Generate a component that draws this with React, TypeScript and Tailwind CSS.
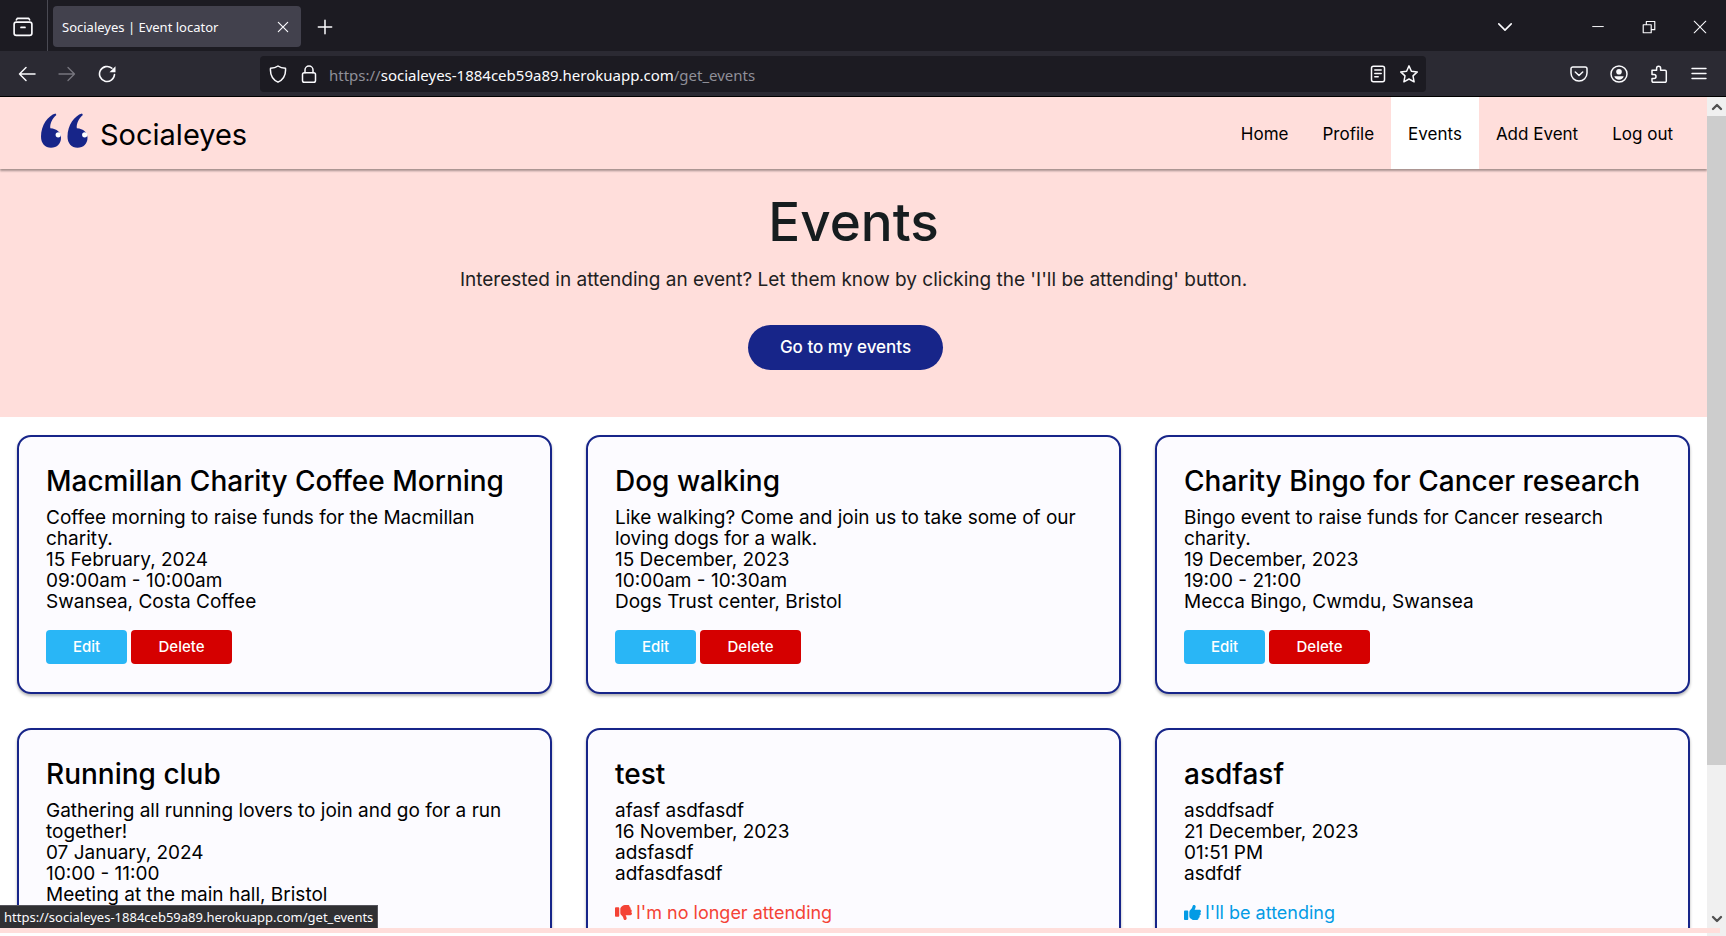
import React from "react";
import { FaThumbsDown, FaThumbsUp } from "react-icons/fa6";

type EventCard = {
  title: string;
  lines: string[];
  action?: "manage" | "leave" | "join";
};

const events: EventCard[] = [
  {
    title: "Macmillan Charity Coffee Morning",
    lines: [
      "Coffee morning to raise funds for the Macmillan charity.",
      "15 February, 2024",
      "09:00am - 10:00am",
      "Swansea, Costa Coffee",
    ],
    action: "manage",
  },
  {
    title: "Dog walking",
    lines: [
      "Like walking? Come and join us to take some of our loving dogs for a walk.",
      "15 December, 2023",
      "10:00am - 10:30am",
      "Dogs Trust center, Bristol",
    ],
    action: "manage",
  },
  {
    title: "Charity Bingo for Cancer research",
    lines: [
      "Bingo event to raise funds for Cancer research charity.",
      "19 December, 2023",
      "19:00 - 21:00",
      "Mecca Bingo, Cwmdu, Swansea",
    ],
    action: "manage",
  },
  {
    title: "Running club",
    lines: [
      "Gathering all running lovers to join and go for a run together!",
      "07 January, 2024",
      "10:00 - 11:00",
      "Meeting at the main hall, Bristol",
    ],
  },
  {
    title: "test",
    lines: ["afasf asdfasdf", "16 November, 2023", "adsfasdf", "adfasdfasdf"],
    action: "leave",
  },
  {
    title: "asdfasf",
    lines: ["asddfsadf", "21 December, 2023", "01:51 PM", "asdfdf"],
    action: "join",
  },
];

const navLinks = ["Home", "Profile", "Events", "Add Event", "Log out"];

function Icon({ children, className = "size-[18px]", width = 1.3 }: { children: React.ReactNode; className?: string; width?: number }) {
  return (
    <svg
      viewBox="0 0 18 18"
      className={className}
      fill="none"
      stroke="currentColor"
      strokeWidth={width}
      strokeLinecap="round"
      strokeLinejoin="round"
      aria-hidden="true"
    >
      {children}
    </svg>
  );
}

function TabStrip() {
  return (
    <div className="flex h-[51px] items-center bg-[#1c1b22]">
      <button aria-label="Firefox View" className="flex h-full w-12 items-center justify-center border-r border-[#4a4a53] pt-0.5 pr-0.5">
        <Icon className="size-5" width={1.5}>
          <rect x="1" y="4.6" width="16" height="12" rx="2" />
          <path d="M3 2.6 4 1.2h10l1 1.4" />
          <path d="M7.2 9.4h3.6" />
        </Icon>
      </button>
      <div className="mt-0.5 ml-[5px] flex h-[41px] w-[248px] items-center justify-between rounded bg-[#42414d] pr-2 pl-[9px] text-[#fbfbfe]">
        <span className="pt-0.5 text-[13px]">Socialeyes | Event locator</span>
        <button aria-label="Close tab" className="flex size-5 items-center justify-center">
          <Icon className="size-3.5" width={1.5}>
            <path d="m3 3 12 12M15 3 3 15" />
          </Icon>
        </button>
      </div>
      <button aria-label="New tab" className="mt-0.5 ml-4 flex size-4 items-center justify-center">
        <Icon width={1.7} className="size-4">
          <path d="M9 1.500v15M1.500 9h15" />
        </Icon>
      </button>
      <div className="ml-auto flex items-center gap-[35px] pt-0.5 pr-[18px]">
        <button aria-label="List all tabs" className="mr-[42px]">
          <Icon className="size-4" width={1.8}>
            <path d="m2 5.500 7 7 7-7" />
          </Icon>
        </button>
        <button aria-label="Minimize">
          <Icon className="size-4" width={1.1}>
            <path d="M3 8.500h12" />
          </Icon>
        </button>
        <button aria-label="Restore">
          <Icon className="size-4" width={1.3}>
            <path d="M2.500 6.500h9v9h-9zM6 6.500V2.800h9.500v9.200h-4" />
          </Icon>
        </button>
        <button aria-label="Close">
          <Icon className="size-4" width={1.2}>
            <path d="m2.500 2.500 13 13M15.500 2.500l-13 13" />
          </Icon>
        </button>
      </div>
    </div>
  );
}

function Toolbar() {
  return (
    <div className="flex h-[46px] items-center border-b border-black bg-[#2b2a33] pt-px">
      <div className="flex items-center gap-[22px] pl-[18px]">
        <button aria-label="Back">
          <Icon width={1.5}>
            <path d="M17 9H1.500M8 2.500 1.500 9 8 15.500" />
          </Icon>
        </button>
        <button aria-label="Forward" className="text-[#77767f]" disabled>
          <Icon width={1.3}>
            <path d="M1 9h15.500M10 2.500 16.500 9 10 15.500" />
          </Icon>
        </button>
        <button aria-label="Reload">
          <Icon width={1.6}>
            <path d="M16.500 9.500A7.500 7.500 0 1 1 13.800 3.200" />
            <path d="M17.500 1.200v6h-6z" fill="currentColor" stroke="none" />
          </Icon>
        </button>
      </div>
      <div className="ml-[144px] flex h-9 grow items-center rounded bg-[#1c1b22] pr-2 pl-[9px]">
        <Icon width={1.5}>
          <path d="M9 1c2 1.500 4.800 2.200 7.500 2.300C17 9.500 14.500 14.500 9 17.200 3.500 14.500 1 9.500 1.500 3.300 4.200 3.200 7 2.500 9 1z" />
        </Icon>
        <Icon className="ml-[13px] size-[18px]" width={1.5}>
          <rect x="2.500" y="7.800" width="13" height="9.400" rx="1.800" />
          <path d="M5 7.800V5a4 4 0 0 1 8 0v2.800" />
        </Icon>
        <p className="ml-[11px] pt-0.5 text-[15px] leading-5 text-[#8f8f98]">
          https://<span className="text-[#fbfbfe]">socialeyes-1884ceb59a89.herokuapp.com</span>/get_events
        </p>
        <button aria-label="Reader view" className="ml-auto">
          <Icon width={1.5}>
            <rect x="2.500" y="1.200" width="13" height="15.600" rx="2" />
            <path d="M5.800 5h6.400M5.800 8.400h6.400M5.800 11.800h3.400" />
          </Icon>
        </button>
        <button aria-label="Bookmark" className="ml-[13px]">
          <Icon width={1.5}>
            <path d="m9 .9 2.400 5.300 5.900.7-4.300 4 1.100 5.900L9 14l-5.100 2.800L5 10.900l-4.300-4 5.900-.7z" />
          </Icon>
        </button>
      </div>
      <div className="ml-[144px] flex items-center gap-[22px] pr-[18px]">
        <button aria-label="Pocket">
          <Icon width={1.5}>
            <path d="M2.800 2h12.400A1.800 1.800 0 0 1 17 3.800V8A8 8 0 0 1 1 8V3.800A1.800 1.800 0 0 1 2.800 2z" />
            <path d="M5.300 7 9 10.500 12.700 7" />
          </Icon>
        </button>
        <button aria-label="Account">
          <Icon width={1.5}>
            <circle cx="9" cy="9" r="8" />
            <circle cx="9" cy="6.700" r="2.800" fill="currentColor" stroke="none" />
            <path d="M4.300 11.200h9.400c-.5 2.200-2.400 3.500-4.700 3.500s-4.200-1.300-4.700-3.500z" fill="currentColor" stroke="none" />
          </Icon>
        </button>
        <button aria-label="Extensions">
          <Icon width={1.5}>
            <path d="M2 5.200h4.600V3.200a2 2 0 0 1 4 0v2H15A1.300 1.300 0 0 1 16.300 6.500V16A1.200 1.200 0 0 1 15 17.200H3.200A1.200 1.200 0 0 1 2 16v-2.500h2a2 2 0 0 0 0-4H2z" />
          </Icon>
        </button>
        <button aria-label="Menu">
          <Icon width={1.4}>
            <path d="M2 3.500h14M2 8.500h14M2 13.500h14" />
          </Icon>
        </button>
      </div>
    </div>
  );
}

function Logo() {
  return (
    <a href="#home" className="flex items-center gap-3 pl-10">
      <svg viewBox="0 0 48 36" className="mb-1 h-9 w-12" aria-hidden="true">
        {[0, 26.5].map((x) => (
          <g key={x} transform={`translate(${x} 0)`}>
            <path
              d="M15.500.4C8 2.500 1 12 1 23.500 1 30.300 5 34.800 11 34.800c6 0 10-4 10-10 0-5.300-4-9.300-10.700-9.600C9.800 10 12.500 5.500 16.400 2z"
              fill="#172589"
            />
            <circle cx="18.200" cy="21.800" r="2.600" fill="#fff" />
          </g>
        ))}
      </svg>
      <span className="pt-1 text-[29px] leading-9">Socialeyes</span>
    </a>
  );
}

function Card({ event }: { event: EventCard }) {
  return (
    <article className="min-h-[259px] rounded-[14px] border-2 border-[#172589] bg-[#fcfbff] px-[27px] pt-[26px] text-black shadow-[0_2px_3px_rgba(0,0,0,0.3)]">
      <h2 className="text-[28px] leading-[36px] font-medium">{event.title}</h2>
      <div className="mt-2 text-[19px] leading-[21px]">
        {event.lines.map((line) => (
          <p key={line}>{line}</p>
        ))}
      </div>
      {event.action === "manage" && (
        <div className="mt-[18px] flex gap-1 text-[15px] font-medium text-white">
          <button className="h-[34px] w-[81px] rounded bg-[#29b6f6]">Edit</button>
          <button className="h-[34px] w-[101px] rounded bg-[#d50000]">Delete</button>
        </div>
      )}
      {event.action === "leave" && (
        <button className="mt-[18px] flex items-center gap-1 text-[18px] leading-[21px] text-[#f44336]">
          <FaThumbsDown className="size-[17px]" />
          I'm no longer attending
        </button>
      )}
      {event.action === "join" && (
        <button className="mt-[18px] flex items-center gap-1 text-[18px] leading-[21px] text-[#039be5]">
          <FaThumbsUp className="size-[17px]" />
          I'll be attending
        </button>
      )}
    </article>
  );
}

function ScrollBar() {
  return (
    <div className="flex w-[19px] shrink-0 flex-col bg-[#f0f0f0] text-[#505050]" aria-hidden="true">
      <div className="flex h-[19px] items-center justify-center">
        <Icon className="size-3" width={3.5}>
          <path d="m3 12 6-6 6 6" />
        </Icon>
      </div>
      <div className="grow-[649] basis-0 bg-[#cdcdcd]" />
      <div className="grow-[144] basis-0" />
      <div className="flex h-[19px] items-center justify-center">
        <Icon className="size-3" width={3.5}>
          <path d="m3 6 6 6 6-6" />
        </Icon>
      </div>
    </div>
  );
}

export default function App() {
  return (
    <div className="flex h-screen flex-col overflow-hidden bg-white">
      <header className="shrink-0 font-['Noto_Sans',sans-serif] text-[#fbfbfe]">
        <TabStrip />
        <Toolbar />
      </header>
      <div className="relative flex min-h-0 grow font-[Inter,sans-serif] text-[#212121]">
        <div className="min-w-0 grow overflow-hidden">
          <nav className="relative flex h-[72px] justify-between bg-[#ffdedb] pr-[17px] text-black shadow-[0_2px_2px_rgba(0,0,0,0.35)]">
            <Logo />
            <ul className="flex text-[17px]">
              {navLinks.map((link) => (
                <li key={link}>
                  <a
                    href="#nav"
                    className={link === "Events" ? "flex h-full items-center bg-white px-[17px] pt-1" : "flex h-full items-center px-[17px] pt-1"}
                  >
                    {link}
                  </a>
                </li>
              ))}
            </ul>
          </nav>
          <section className="flex h-[248px] flex-col items-center bg-[#ffdedb] pt-5">
            <h1 className="text-[53px] leading-[66px] font-medium text-[#161d1f]">Events</h1>
            <p className="mt-3 text-[19px] leading-[26px]">
              Interested in attending an event? Let them know by clicking the 'I'll be attending' button.
            </p>
            <button className="mt-8 mr-4 h-[45px] rounded-full bg-[#172589] px-8 text-[17px] font-medium text-white">Go to my events</button>
          </section>
          <main className="grid grid-cols-3 gap-[34px] px-[17px] pt-[18px]">
            {events.map((event) => (
              <Card key={event.title} event={event} />
            ))}
          </main>
        </div>
        <ScrollBar />
        <div className="absolute bottom-0 left-0 border border-b-0 border-l-0 border-[#55545c] bg-[#303033] px-1 font-['Noto_Sans',sans-serif] text-[13px] leading-[22px] text-[#fbfbfe]">
          https://socialeyes-1884ceb59a89.herokuapp.com/get_events
        </div>
      </div>
      <footer className="shrink-0">
        <div className="flex h-[5px] bg-[#ffdedb]">
          <div className="ml-auto w-1.5 bg-[#f0f0f0]" />
        </div>
        <div className="flex h-[3px]">
          <div className="ml-auto w-[19px] bg-[#f0f0f0]" />
        </div>
      </footer>
    </div>
  );
}
